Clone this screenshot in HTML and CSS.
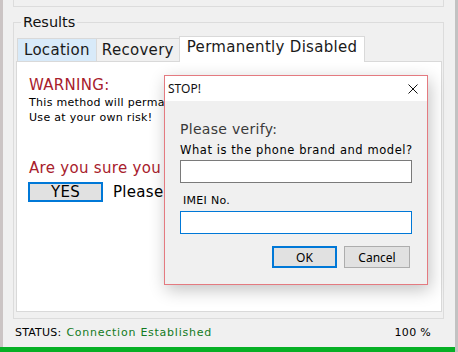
FILE: index.html
```html
<!DOCTYPE html>
<html lang="en">
<head>
<meta charset="utf-8">
<title>Results</title>
<link rel="stylesheet" href="styles.css">
</head>
<body>
<div class="screen">
  <div class="frame">
    <div class="edge-left"></div>
    <div class="main">
      <div class="prev-group"></div>
      <fieldset class="results">
        <legend>Results</legend>
        <div class="tabs">
          <div class="tab hover">Location</div>
          <div class="tab">Recovery</div>
          <div class="tab active">Permanently Disabled</div>
        </div>
        <div class="panel">
          <div class="warn-title">WARNING:</div>
          <p class="warn-text">This method will permanently disable the device.<br>Use at your own risk!</p>
          <div class="question">Are you sure you want to continue?</div>
          <div class="confirm-row">
            <button class="btn yes">YES</button>
            <span class="confirm-note">Please</span>
          </div>
        </div>
      </fieldset>
      <div class="status">
        <span class="status-label">STATUS:</span>
        <span class="status-value">Connection Established</span>
        <span class="status-pct">100 %</span>
      </div>
    </div>
    <div class="edge-right"></div>
  </div>
  <div class="bottom">
    <div class="progress"></div>
    <div class="edge-corner"></div>
  </div>

  <div class="dialog">
    <div class="dlg-title">
      <span>STOP!</span>
      <svg class="dlg-close" width="10" height="10" viewBox="0 0 10 10"><path d="M0.5 0.5 L9.5 9.5 M9.5 0.5 L0.5 9.5" stroke="#111" stroke-width="1" fill="none"/></svg>
    </div>
    <div class="dlg-body">
      <div class="dlg-heading">Please verify:</div>
      <div class="dlg-label">What is the phone brand and model?</div>
      <input class="dlg-input" type="text">
      <div class="dlg-label imei">IMEI No.</div>
      <input class="dlg-input focus" type="text">
      <div class="dlg-actions">
        <button class="dbtn ok">OK</button>
        <button class="dbtn cancel">Cancel</button>
      </div>
    </div>
  </div>
</div>
</body>
</html>
```

FILE: styles.css
```css
* { box-sizing: border-box; }
html, body { margin: 0; padding: 0; }
body {
  width: 458px;
  height: 352px;
  overflow: hidden;
  background: #f0f0f0;
  font-family: "DejaVu Sans", sans-serif;
  color: #000;
}
.screen {
  position: relative;
  width: 458px;
  height: 352px;
  display: flex;
  flex-direction: column;
}
.frame {
  display: flex;
  height: 347px;
}
.edge-left { width: 3px; background: #cbc4c4; }
.edge-right { width: 3px; background: #c2c2c2; }
.main {
  flex: 1;
  display: flex;
  flex-direction: column;
  min-width: 0;
}
.prev-group {
  height: 7px;
  margin: 0 11px 0 10px;
  border: 1px solid #dcdcdc;
  border-top: none;
}
.results {
  margin: 6px 11px 0 10px;
  padding: 5px 1px 6px 2px;
  border: 1px solid #dcdcdc;
  min-width: 0;
}
.results legend {
  margin-left: 5px;
  padding: 0 2px;
  font-size: 14.5px;
  line-height: 18px;
  color: #111;
}
.tabs {
  display: flex;
  align-items: flex-end;
  padding-left: 1px;
  height: 26px;
  position: relative;
  z-index: 1;
  margin-bottom: -1px;
}
.tab {
  height: 23px;
  margin-bottom: 1px;
  padding: 0 6px;
  border: 1px solid #d9d9d9;
  border-bottom: none;
  background: #f0f0f0;
  font-size: 15px;
  letter-spacing: 0.3px;
  line-height: 22px;
  color: #1a1a1a;
  white-space: nowrap;
}
.tab + .tab { margin-left: -1px; padding: 0 5px; }
.tab.hover { background: #d8eaf9; }
.tab.active {
  height: 26px;
  margin-bottom: 0;
  padding: 0 7px;
  background: #fff;
  line-height: 20px;
}
.panel {
  height: 251px;
  background: #fff;
  border: 1px solid #d9d9d9;
  padding: 14px 0 0 12px;
  overflow: hidden;
  white-space: nowrap;
}
.warn-title {
  font-size: 15px;
  line-height: 18px;
  letter-spacing: 0.3px;
  color: #a8202c;
}
.warn-text {
  margin: 1px 0 0 0;
  font-size: 11px;
  line-height: 15px;
  letter-spacing: 0.3px;
}
.question {
  margin-top: 34px;
  font-size: 15px;
  line-height: 18px;
  letter-spacing: 0.3px;
  color: #a8202c;
}
.confirm-row {
  margin-top: 5px;
  display: flex;
  align-items: center;
  gap: 10px;
}
.btn {
  font-family: "DejaVu Sans", sans-serif;
  font-size: 15px;
  letter-spacing: 0.3px;
  color: #000;
  background: #e1e1e1;
  border: 2px solid #0078d7;
  padding: 0;
  margin: 0;
}
.btn.yes { width: 75px; height: 20px; line-height: 16px; margin-left: -1px; }
.confirm-note { font-size: 15px; letter-spacing: 0.3px; }
.status {
  display: flex;
  align-items: baseline;
  padding: 7px 24px 0 12px;
  font-size: 11px;
  line-height: 14px;
}
.status-label { letter-spacing: 0.2px; }
.status-value { margin-left: 5px; color: #127a22; letter-spacing: 0.75px; }
.status-pct { margin-left: auto; letter-spacing: 0.3px; }
.bottom { display: flex; height: 5px; }
.progress { width: 455px; background: #06b025; }
.edge-corner { flex: 1; background: #c2c2c2; }

/* dialog overlay */
.dialog {
  position: absolute;
  left: 164px;
  top: 75px;
  width: 264px;
  height: 210px;
  border: 1px solid #e47a80;
  background: #f0f0f0;
  box-shadow: 2px 5px 16px rgba(0, 0, 0, 0.24);
  display: flex;
  flex-direction: column;
}
.dlg-title {
  height: 25px;
  background: #fff;
  display: flex;
  align-items: center;
  justify-content: space-between;
  padding: 0 9px 0 3px;
  font-family: "Noto Sans", sans-serif;
  font-size: 12px;
  color: #111;
}
.dlg-close { display: block; }
.dlg-body {
  flex: 1;
  padding: 20px 15px 0 15px;
  display: flex;
  flex-direction: column;
}
.dlg-heading {
  font-size: 14px;
  line-height: 17px;
  letter-spacing: 0.3px;
  color: #3a3a3a;
}
.dlg-label {
  margin-top: 5px;
  font-size: 11.5px;
  line-height: 14px;
  letter-spacing: 0.57px;
  white-space: nowrap;
}
.dlg-label.imei { margin-top: 11px; margin-left: 3px; letter-spacing: 0.3px; font-size: 11px; }
.dlg-input {
  display: block;
  margin: 3px 0 0 0;
  width: 232px;
  height: 23px;
  border: 1px solid #7a7a7a;
  background: #fff;
  padding: 0;
  outline: none;
}
.dlg-input.focus { border-color: #0078d7; }
.dlg-actions {
  margin: 12px 2px 0 0;
  display: flex;
  justify-content: flex-end;
  gap: 7px;
}
.dbtn {
  height: 22px;
  padding: 0;
  margin: 0;
  background: #e1e1e1;
  font-family: "Noto Sans", sans-serif;
  font-size: 12px;
  color: #000;
}
.dbtn.ok { width: 65px; border: 2px solid #0078d7; }
.dbtn.cancel { width: 66px; border: 1px solid #adadad; }
```
